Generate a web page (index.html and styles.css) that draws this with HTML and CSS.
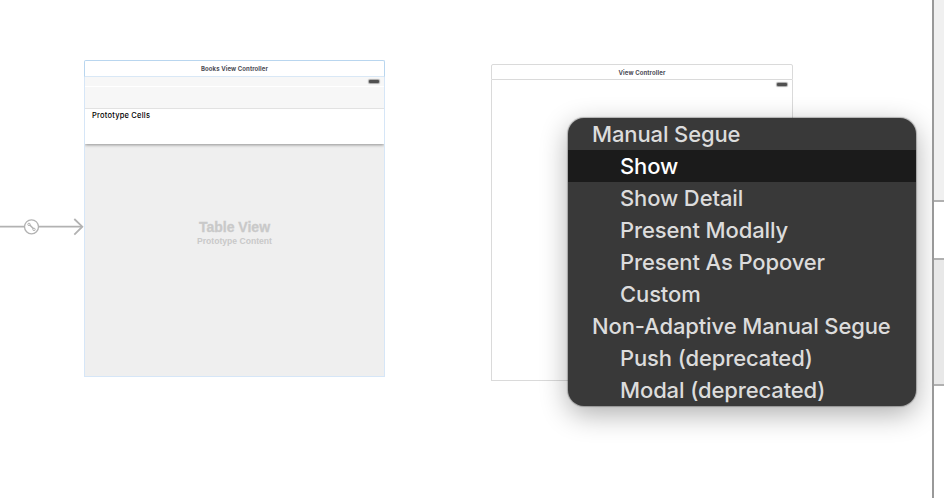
FILE: index.html
```html
<!DOCTYPE html>
<html lang="en">
<head>
<meta charset="utf-8">
<title>Storyboard</title>
<link rel="stylesheet" href="styles.css">
</head>
<body>
<div class="editor">
  <main class="canvas">
    <svg class="entry" width="84" height="20" viewBox="0 0 84 20" fill="none" stroke="#b2b2b2">
      <path d="M0 9.7H24.5M38.5 9.7H82" stroke-width="1.7"/>
      <path d="M74.3 2L82.3 9.7L74.3 17.7" stroke-width="1.8"/>
      <circle cx="31.5" cy="9.8" r="7" stroke-width="1.3"/>
      <path d="M29.5 7.8L33.5 11.8" stroke-width="1.6"/>
      <circle cx="29" cy="7.4" r="1.2"/>
      <circle cx="34" cy="12.4" r="1.2"/>
    </svg>

    <section class="scene books">
      <header class="scene-title">Books View Controller</header>
      <div class="scene-body">
        <div class="status"><i class="battery"></i></div>
        <div class="navbar"></div>
        <div class="cell">Prototype Cells</div>
        <div class="table"><strong>Table View</strong><span>Prototype Content</span></div>
      </div>
    </section>

    <section class="scene plain">
      <header class="scene-title">View Controller</header>
      <div class="scene-body">
        <div class="status"><i class="battery"></i></div>
      </div>
    </section>

    <div class="menu">
      <div class="group"><span>Manual Segue</span></div>
      <div class="item selected"><span>Show</span></div>
      <div class="item"><span>Show Detail</span></div>
      <div class="item"><span>Present Modally</span></div>
      <div class="item"><span>Present As Popover</span></div>
      <div class="item"><span>Custom</span></div>
      <div class="group"><span>Non-Adaptive Manual Segue</span></div>
      <div class="item"><span>Push (deprecated)</span></div>
      <div class="item"><span>Modal (deprecated)</span></div>
    </div>
  </main>
  <aside class="inspector">
    <div class="pane top"></div>
    <div class="pane middle"></div>
    <div class="pane lower"></div>
  </aside>
</div>
</body>
</html>
```
FILE: styles.css
```css
* { box-sizing: border-box; }
body { margin: 0; background: #fff; font-family: Inter, "Liberation Sans", sans-serif; }
.editor { display: flex; height: 498px; overflow: hidden; }
.canvas { position: relative; flex: 1; overflow: hidden; }
.inspector { width: 12px; border-left: 2px solid #999; display: flex; flex-direction: column; }
.pane { border-bottom: 2px solid #b0b0b0; }
.top { height: 202px; background: #f0f0f0; }
.middle { height: 58px; }
.lower { height: 126px; background: #e8e8e8; }

.entry { position: absolute; left: 0; top: 217px; }
.scene { position: absolute; display: flex; flex-direction: column; width: 301px; height: 317px; }
.books { left: 84px; top: 60px; }
.plain { left: 491px; top: 64px; width: 302px; }
.scene-title {
  height: 17px; border: 1px solid #b9d6ef; border-bottom-color: #d9e8f6; border-radius: 2px 2px 0 0;
  font-size: 6px; font-weight: 700; line-height: 16px; text-align: center; color: #4c4c55; letter-spacing: 0.1px;
}
.scene-body { flex: 1; display: flex; flex-direction: column; border: 1px solid #d6e6f7; border-top: 0; }
.plain .scene-title { height: 16px; border-color: #dadada; line-height: 15px; }
.plain .scene-body { border-color: #dadada; }
.status { display: flex; justify-content: flex-end; height: 9px; padding: 3px 5px 0 0; }
.battery { width: 10px; height: 3px; border-radius: 1px; background: #505050; box-shadow: 0 0 1px 1px #a8a8a8; }
.books .status { background: #f7f7f7; }
.navbar { height: 23px; background: #f7f7f7; border-top: 1px solid #fff; border-bottom: 1px solid #e2e2e2; }
.cell {
  position: relative; height: 35px; background: #fff; padding-left: 7px;
  font-size: 7.5px; font-weight: 500; line-height: 14px; color: #000; letter-spacing: 0.22px;
  box-shadow: 0 1px 3px rgba(0,0,0,.4); clip-path: inset(0 0 -6px 0);
}
.table {
  flex: 1; display: flex; flex-direction: column; align-items: center; padding-top: 75px;
  background: #efefef; color: #c9c9c9; font-family: "Liberation Sans", sans-serif; font-weight: 700;
}
.table strong { font-size: 14px; line-height: 16px; -webkit-text-stroke: 0.3px #c9c9c9; }
.table span { font-size: 8.6px; line-height: 12px; }

.menu {
  position: absolute; left: 568px; top: 118px; width: 348px; border-radius: 16px; overflow: hidden;
  background: #393939; color: #dcdcdc; font-size: 22px; font-weight: 500; line-height: 32px; white-space: nowrap;
  letter-spacing: -0.12px;
  box-shadow: 0 0 1px 1px rgba(0,0,0,.25), 0 8px 28px rgba(0,0,0,.32);
}
.group { height: 32px; padding-left: 24px; }
.item { height: 32px; padding-left: 52px; }
.selected { background: #1b1b1b; color: #fff; }
```
